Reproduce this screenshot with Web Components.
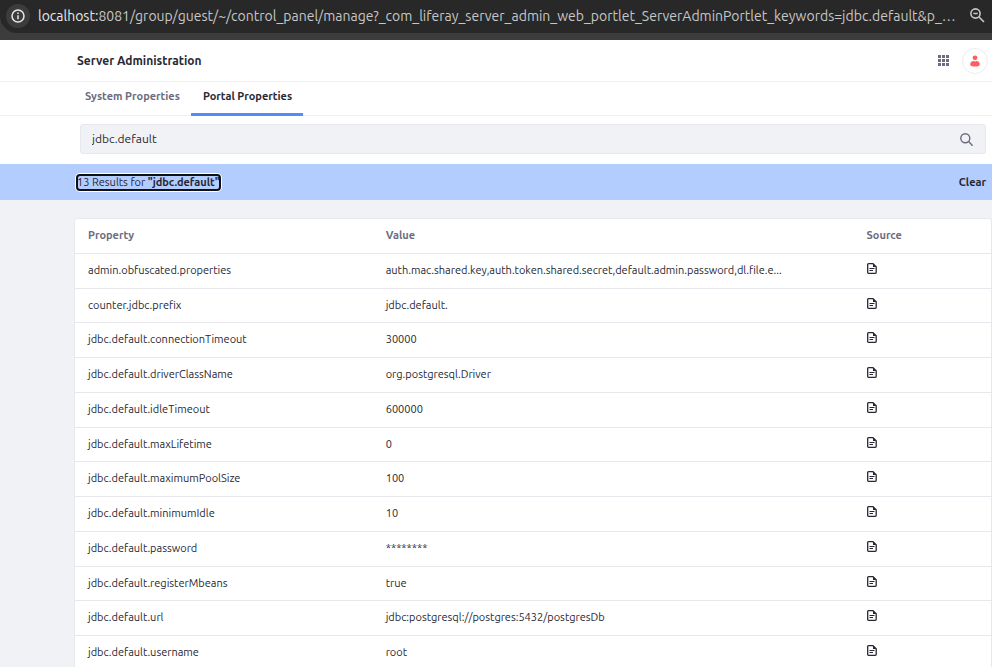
<!DOCTYPE html>
<html lang="en">
<head>
<meta charset="utf-8">
<meta name="viewport" content="width=device-width, initial-scale=1">
<title>Server Administration</title>
<style>
html { height: 100%; }
body { margin: 0; min-height: 100%; background: #f1f2f5; color: #272833; font: 11px/16px Ubuntu, Lato, sans-serif; overflow: hidden; }
</style>
</head>
<body>
<admin-page></admin-page>
<script>
const define = (name, html, setup) => customElements.define(name, class extends HTMLElement {
  connectedCallback() {
    if (this.shadowRoot) return;
    const t = document.createElement('template');
    t.innerHTML = html;
    this.attachShadow({ mode: 'open' }).append(t.content.cloneNode(true));
    if (setup) setup(this, this.shadowRoot);
  }
});

define('address-bar', `<style>
:host { display: block; background: #3c3c3c; padding-bottom: 7px; }
.bar { display: flex; align-items: center; box-sizing: border-box; height: 33px; padding: 0 7px 2px 6px; background: #282828; border-radius: 0 0 0 17px; color: #c7c7c7; font: 14px/20px Ubuntu, "Open Sans", sans-serif; }
button { display: flex; border: 0; padding: 0; background: none; color: #c7c7c7; }
.info { width: 24px; height: 24px; border-radius: 50%; background: #3c3c3c; align-items: center; justify-content: center; flex: none; }
.url { flex: 1; min-width: 0; padding-left: 8px; white-space: nowrap; overflow: hidden; }
b { font-weight: 400; color: #e8e8e8; }
svg { display: block; }
</style>
<div class="bar">
<button class="info" aria-label="View site information"><svg width="14" height="14" viewBox="0 0 14 14" fill="none" stroke="#e8e8e8"><circle cx="7" cy="7" r="6" stroke-width="1.5"/><path d="M7 6.2v4M7 3.6v1.4" stroke-width="1.5"/></svg></button>
<span class="url"><b>localhost:</b>8081/group/guest/~/control_panel/manage?_com_liferay_server_admin_web_portlet_ServerAdminPortlet_keywords=jdbc.default&amp;p_…</span>
<button aria-label="Zoom"><svg width="15" height="15" viewBox="0 0 15 15" fill="none" stroke="currentColor" stroke-width="1.6"><circle cx="5.5" cy="5.5" r="4.6"/><path d="M9 9l5 5M3.3 5.5h4.4"/></svg></button>
</div>`);

define('admin-header', `<style>
:host { display: flex; align-items: center; box-sizing: border-box; height: 42px; padding: 0 4px 0 77px; background: #fff; border-bottom: 1px solid #f0f0f2; }
h1 { margin: 0; flex: 1; font-size: 12px; line-height: 20px; }
button { display: flex; align-items: center; justify-content: center; border: 0; padding: 0; background: none; }
.user { box-sizing: border-box; width: 26px; height: 26px; margin-left: 13px; border: 1px solid #ececef; border-radius: 50%; }
</style>
<h1>Server Administration</h1>
<button aria-label="Applications"><svg width="11" height="11" viewBox="0 0 11 11" fill="#6b6c7e"><path d="M0 0h3v3H0zM4 0h3v3H4zM8 0h3v3H8zM0 4h3v3H0zM4 4h3v3H4zM8 4h3v3H8zM0 8h3v3H0zM4 8h3v3H4zM8 8h3v3H8z"/></svg></button>
<button class="user" aria-label="User profile"><svg width="10" height="12" viewBox="0 0 10 12" fill="#ff5f5f"><circle cx="5" cy="2.8" r="2.4"/><path d="M0.2 9.4C0.2 7.2 2 6 3.5 6c1 .5 2 .5 3 0C8 6 9.8 7.2 9.8 9.4c0 1.6-2 2-4.8 2s-4.8-.4-4.8-2z"/></svg></button>`);

define('tab-bar', `<style>
:host { display: flex; box-sizing: border-box; height: 34px; padding-left: 73px; background: #fff; border-bottom: 1px solid #eeeff2; }
</style><slot></slot>`);

define('tab-link', `<style>
:host { display: block; }
a { display: block; box-sizing: border-box; height: 34px; padding: 6px 11px 0 12px; color: #6b6c7e; font-weight: 700; text-decoration: none; white-space: nowrap; }
:host([active]) a { color: #272833; border-bottom: 3px solid #528bff; }
</style><a href="#"><slot></slot></a>`);

define('search-bar', `<style>
:host { display: block; padding: 8px 6px 10px 80px; background: #fff; }
form { display: flex; align-items: center; box-sizing: border-box; height: 30px; padding: 0 12px 0 11px; background: #f1f2f5; border: 1px solid #e7e7ed; border-radius: 3px; }
input { flex: 1; min-width: 0; border: 0; padding: 0; background: none; outline: 0; color: #272833; font: inherit; font-size: 12px; line-height: 20px; }
button { display: flex; border: 0; padding: 0; background: none; }
</style>
<form role="search"><input type="text" aria-label="Search" value="jdbc.default"><button type="button" aria-label="Search"><svg width="13" height="13" viewBox="0 0 13 13" fill="none" stroke="#6b6c7e" stroke-width="1.4"><circle cx="5.3" cy="5.3" r="4.5"/><path d="M8.6 8.6l3.6 3.6" stroke-linecap="round"/></svg></button></form>`);

define('result-bar', `<style>
:host { display: flex; align-items: center; justify-content: space-between; box-sizing: border-box; height: 36px; padding: 0 6px 0 77px; background: #b3cdff; }
span { line-height: 15px; border-radius: 3px; outline: 2px solid #111; outline-offset: -1px; box-shadow: 0 0 0 2px #fff; }
a { color: #272833; font-weight: 700; text-decoration: none; padding-bottom: 1px; }
</style><span tabindex="-1"><slot></slot></span><a href="#">Clear</a>`);

define('property-table', `<style>
:host { display: block; margin: 18px 0 0 74px; background: #fff; border: 1px solid #e7e7ed; border-radius: 3px 3px 0 0; }
table { width: 100%; border-spacing: 0; table-layout: fixed; }
th, td { box-sizing: border-box; height: 35px; padding: 0 13px 2px; text-align: left; border-bottom: 1px solid #e7e7ed; white-space: nowrap; }
tbody tr:nth-child(4n+2) td { height: 34px; }
th { color: #6b6c7e; }
.source { padding-bottom: 5px; }
.property, .value { overflow: hidden; text-overflow: ellipsis; }
col.c1 { width: 32.5%; }
col.c3 { width: 15%; }
a { display: block; width: 10px; }
svg { display: block; }
</style>
<table><colgroup><col class="c1"><col><col class="c3"></colgroup>
<thead><tr><th scope="col">Property</th><th scope="col">Value</th><th scope="col">Source</th></tr></thead><tbody></tbody></table>`, (host, root) => {
  const rows = [
    ['admin.obfuscated.properties', 'auth.mac.shared.key,auth.token.shared.secret,default.admin.password,dl.file.e...'],
    ['counter.jdbc.prefix', 'jdbc.default.'],
    ['jdbc.default.connectionTimeout', '30000'],
    ['jdbc.default.driverClassName', 'org.postgresql.Driver'],
    ['jdbc.default.idleTimeout', '600000'],
    ['jdbc.default.maxLifetime', '0'],
    ['jdbc.default.maximumPoolSize', '100'],
    ['jdbc.default.minimumIdle', '10'],
    ['jdbc.default.password', '********'],
    ['jdbc.default.registerMbeans', 'true'],
    ['jdbc.default.url', 'jdbc:postgresql://postgres:5432/postgresDb'],
    ['jdbc.default.username', 'root']
  ];
  root.querySelector('tbody').innerHTML = rows.map(([name, value]) => `<tr><td class="property">${name}</td><td class="value">${value}</td><td class="source"><a href="#" aria-label="Source: portal properties file"><svg width="10" height="11" viewBox="0 0 10 11" fill="none" stroke="#272833"><path d="M1.5.7H6L9.2 3.8V9.5a.8.8 0 0 1-.8.8H1.5a.8.8 0 0 1-.8-.8v-8a.8.8 0 0 1 .8-.8z" stroke-width="1.3"/><path d="M6 .7V4h3.2z" fill="#272833" stroke="none"/><path d="M2.5 5.5h5M2.5 7.5h3.5" stroke-width="1"/></svg></a></td></tr>`).join('');
});

define('admin-page', `<style>
:host { display: block; }
</style>
<address-bar></address-bar>
<admin-header></admin-header>
<tab-bar><tab-link>System Properties</tab-link><tab-link active>Portal Properties</tab-link></tab-bar>
<search-bar></search-bar>
<result-bar>13 Results for <b>"jdbc.default"</b></result-bar>
<property-table></property-table>`);
</script>
</body>
</html>
